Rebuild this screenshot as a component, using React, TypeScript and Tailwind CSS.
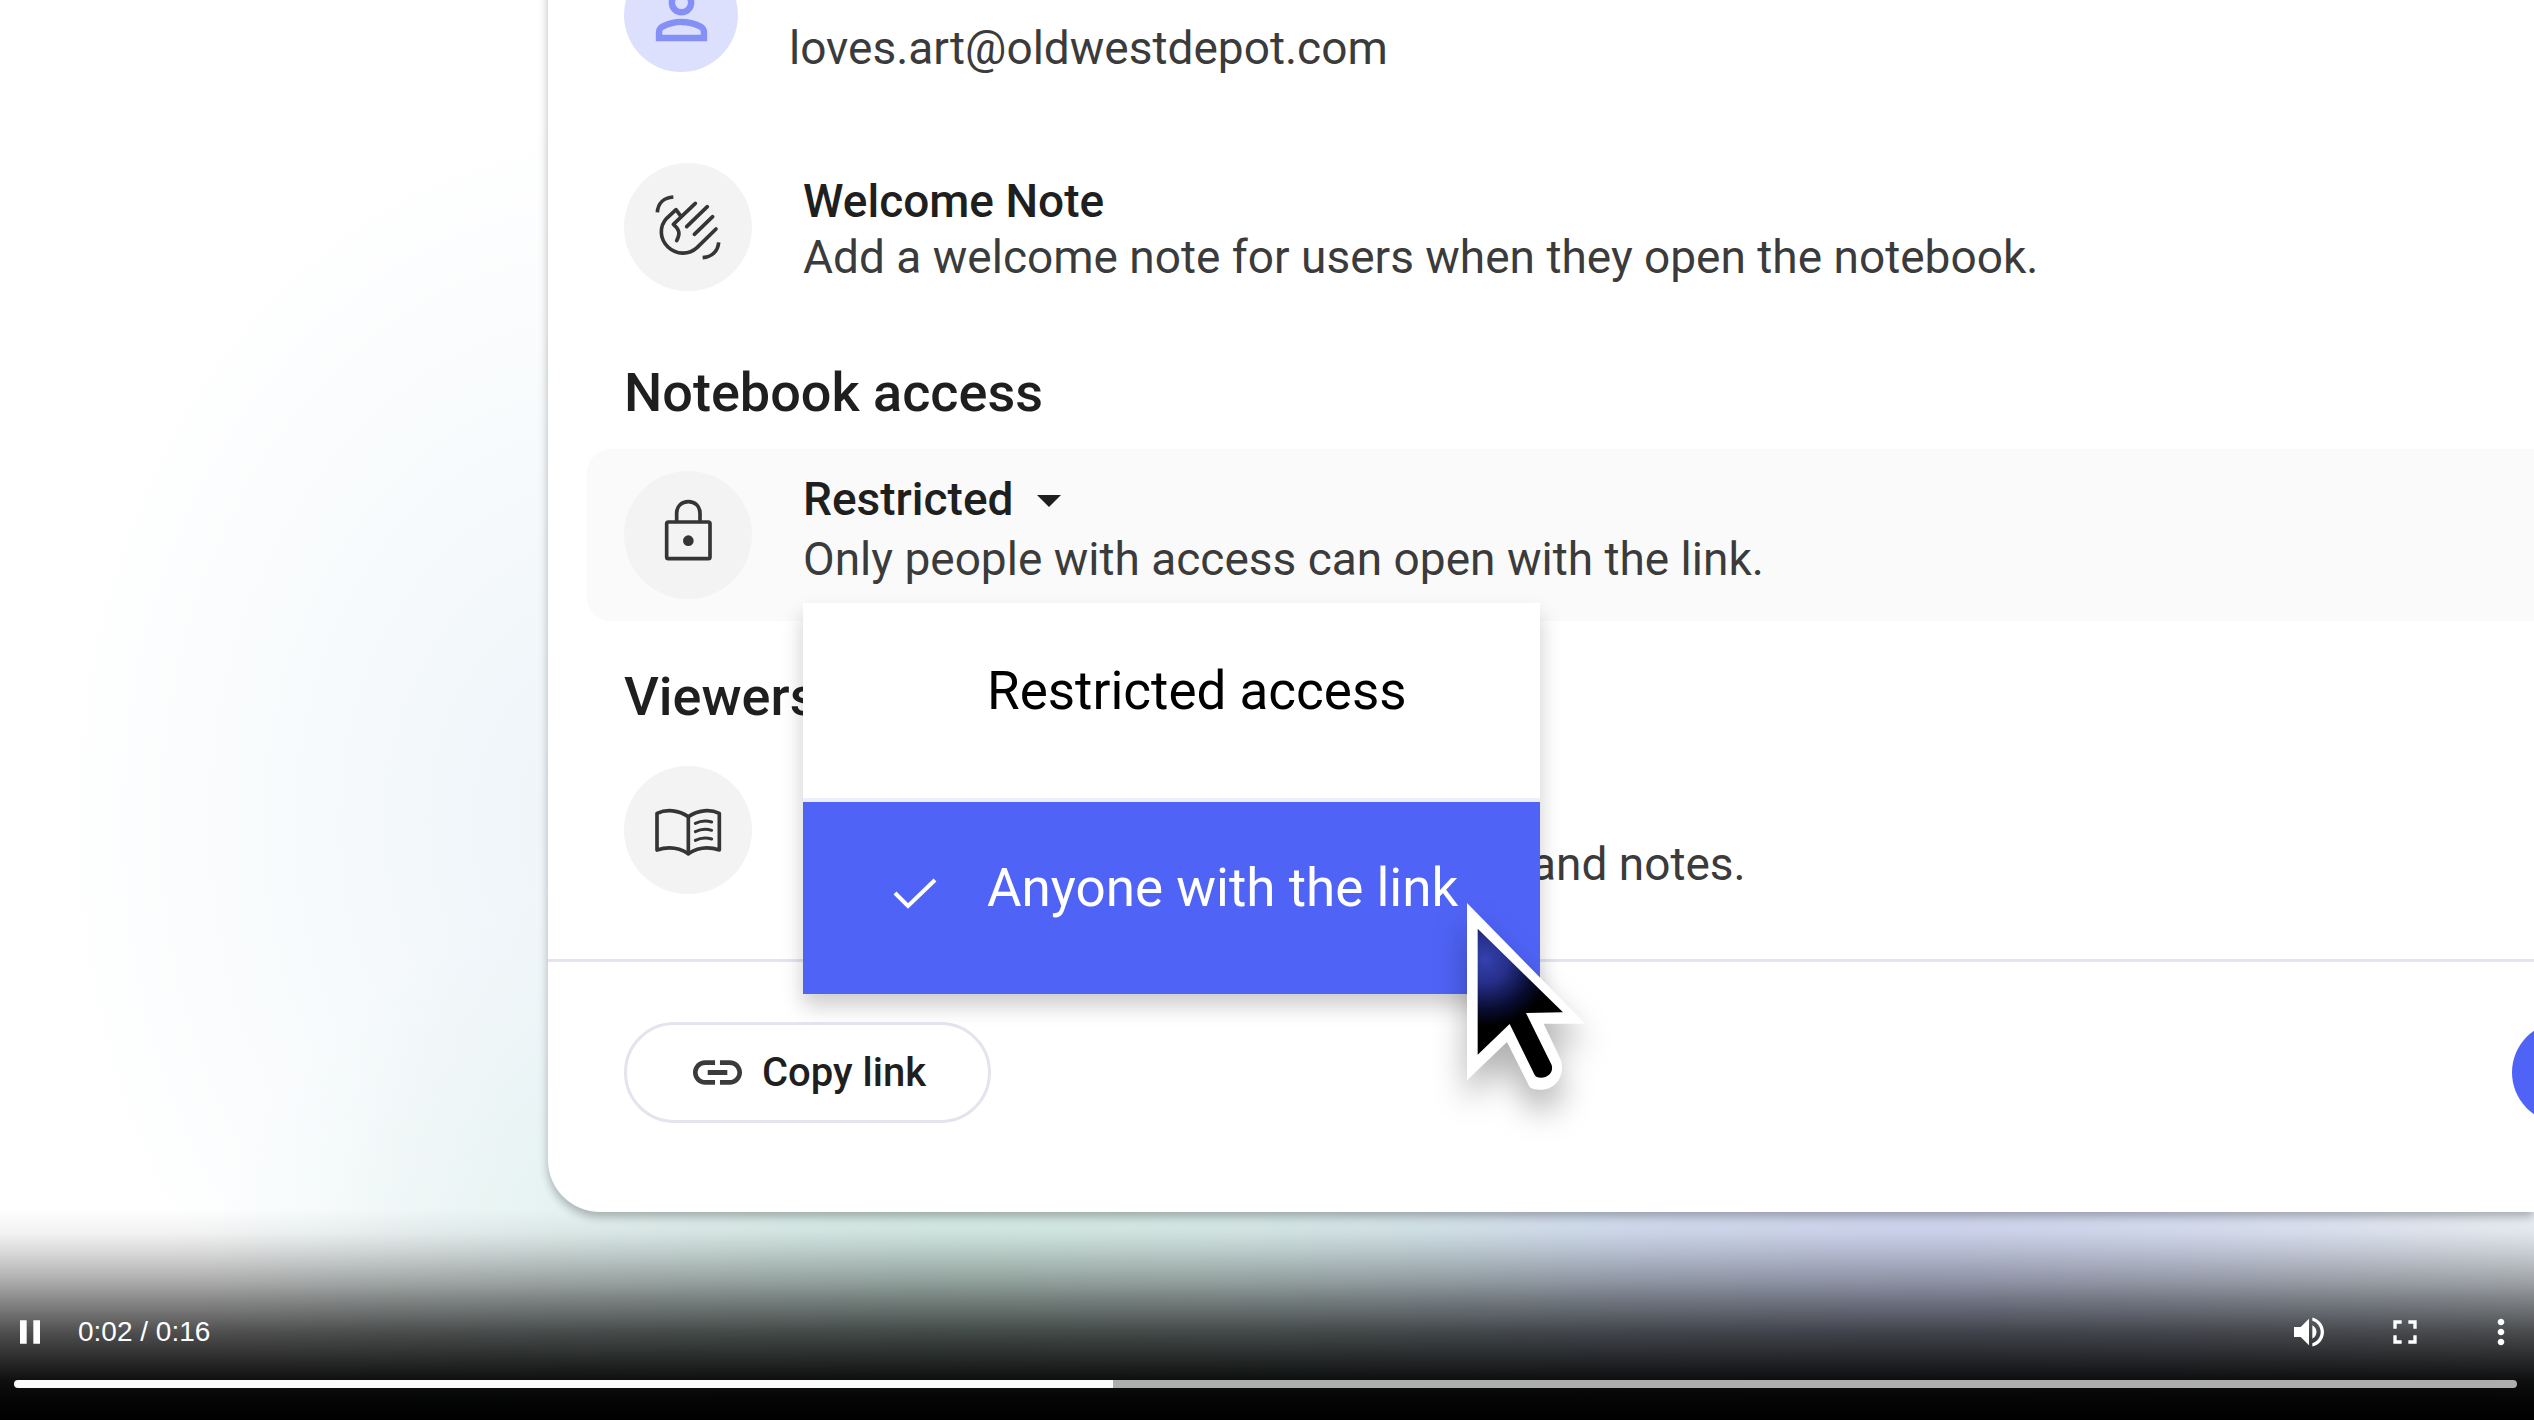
import { useState } from 'react';
import type { ReactNode } from 'react';

const ACCESS_OPTIONS = ['Restricted access', 'Anyone with the link'];

function CircleIcon({ viewBox, children }: { viewBox: string; children: ReactNode }) {
  return (
    <div className="size-32 shrink-0 rounded-full bg-[#f3f3f3]">
      <svg
        viewBox={viewBox}
        className="size-full text-[#353535]"
        fill="none"
        stroke="currentColor"
        strokeWidth={11}
        strokeLinecap="round"
        strokeLinejoin="round"
        aria-hidden="true"
      >
        {children}
      </svg>
    </div>
  );
}

function WaveIcon() {
  return (
    <CircleIcon viewBox="-48 39 384 384">
      <g strokeLinecap="butt">
        <path d="M52 187C54 160 71 143 100 141" />
        <path d="M236 277C234 303 216 321 188 323" />
      </g>
      <path d="M166 160L100 223C119 238 121 251 110 272" />
      <path d="M123 199L108 179L80 205C58 229 58 266 84 291C109 315 147 315 171 293L228 237" />
      <path d="M202 170L140 230" />
      <path d="M218 200L163 253" />
    </CircleIcon>
  );
}

function LockIcon() {
  return (
    <CircleIcon viewBox="-48 -27 384 384">
      <rect x="80" y="126" width="130" height="110" rx="5" />
      <path d="M110 124V100C110 78 125 65 145 65S180 78 180 100V124" />
      <circle cx="145" cy="182" r="16" fill="currentColor" stroke="none" />
    </CircleIcon>
  );
}

function BookIcon() {
  return (
    <CircleIcon viewBox="-48 18 384 384">
      <path d="M51 160C80 147 116 150 145 170C174 150 210 147 238 160V270C208 260 174 262 145 281C116 262 82 260 51 270Z" />
      <path d="M145 170V281" />
      <path d="M166 190Q190 178 215 186M166 215Q190 203 215 211M166 241Q190 229 215 237" strokeWidth={9} />
    </CircleIcon>
  );
}

function Cursor() {
  return (
    <svg
      viewBox="80 70 360 564"
      className="pointer-events-none absolute top-[300px] left-[664px] h-[188px] w-[120px] overflow-visible drop-shadow-[0_20px_16px_rgba(0,0,0,0.3)]"
      aria-hidden="true"
    >
      <defs>
        <radialGradient id="cursor-fill" gradientUnits="userSpaceOnUse" cx="135" cy="240" r="200">
          <stop offset="0" stopColor="#3441b0" />
          <stop offset="0.35" stopColor="#262f88" />
          <stop offset="0.75" stopColor="#090c30" />
          <stop offset="1" stopColor="#000" />
        </radialGradient>
      </defs>
      <path
        fill="#fff"
        d="M80 70L435 432H310L362 542C374 580 352 628 305 630C280 630 270 626 266 618L200 487L80 602Z"
      />
      <path
        fill="url(#cursor-fill)"
        d="M112 147L368 398L257 400L334 556C340 578 324 594 302 594C292 594 286 592 283 586L208 433L112 525Z"
      />
    </svg>
  );
}

function AccessMenu({ selected, onSelect }: { selected: string; onSelect: (v: string) => void }) {
  return (
    <div className="absolute top-[132px] left-0 w-[737px] bg-white shadow-[0_12px_20px_rgba(0,0,0,0.2)]">
      <ul role="listbox" aria-label="Notebook access">
        {ACCESS_OPTIONS.map((option) => {
          const active = option === selected;
          return (
            <li key={option} role="option" aria-selected={active}>
              <button
                onClick={() => onSelect(option)}
                className={
                  active
                    ? 'flex h-48 w-full items-center bg-[#4f63f6] pb-5 pl-[90px] text-white'
                    : 'flex h-[199px] w-full items-center border-b-4 border-[#eceef9] pb-5 pl-[90px] text-black'
                }
              >
                <span className="w-[94px]">
                  {active && (
                    <svg
                      viewBox="0 0 44 32"
                      className="mt-3 h-8 w-11"
                      fill="none"
                      stroke="currentColor"
                      strokeWidth={4}
                      aria-hidden="true"
                    >
                      <path d="M2 15L15 28L42 2" />
                    </svg>
                  )}
                </span>
                <span className="text-[53px] leading-16">{option}</span>
              </button>
            </li>
          );
        })}
      </ul>
      <Cursor />
    </div>
  );
}

function ShareCard() {
  const [selected, setSelected] = useState(ACCESS_OPTIONS[1]);

  return (
    <main className="relative ml-[548px] rounded-bl-[52px] bg-white pb-[89px] text-[46px] leading-14 text-[#3b3b3b] shadow-[0_5px_10px_rgba(0,0,0,0.28)]">
      <div className="pl-[76px]">
        <div className="-mt-[42px] flex h-[114px] gap-[51px]">
          <div className="flex size-[114px] shrink-0 items-center justify-center rounded-full bg-[#dde0fd]">
            <svg viewBox="0 0 24 24" className="size-[77px] text-[#8490f6]" fill="currentColor" aria-hidden="true">
              <path d="M12 12q-1.65 0-2.825-1.175T8 8t1.175-2.825T12 4t2.825 1.175T16 8t-1.175 2.825T12 12m0-2q.825 0 1.413-.587T14 8t-.587-1.412T12 6t-1.412.588T10 8t.588 1.413T12 10" />
              <path d="M4 20v-2.8q0-.85.438-1.562T5.6 14.55q1.55-.775 3.15-1.162T12 13t3.25.388 3.15 1.162q.725.375 1.163 1.088T20 17.2V20zm2-2h12v-.8q0-.275-.137-.5t-.363-.35q-1.35-.675-2.725-1.012T12 15t-2.775.338T6.5 16.35q-.225.125-.363.35T6 17.2z" />
            </svg>
          </div>
          <p className="self-end leading-12">loves.art@oldwestdepot.com</p>
        </div>

        <div className="mt-[91px] flex items-center gap-[51px]">
          <WaveIcon />
          <div className="pt-1">
            <h3 className="font-medium text-[#1f1f1f]">Welcome Note</h3>
            <p>Add a welcome note for users when they open the notebook.</p>
          </div>
        </div>

        <h2 className="mt-[72px] text-[54px] leading-15 font-medium text-[#1f1f1f]">Notebook access</h2>
        <div className="relative z-10 mt-[26px] -ml-[37px] flex gap-[51px] rounded-l-3xl bg-[#fafafa] py-[22px] pl-[37px]">
          <LockIcon />
          <div className="relative flex flex-col gap-1">
            <button
              className="flex items-center gap-6 font-medium text-[#1f1f1f]"
              aria-haspopup="listbox"
              aria-expanded="true"
            >
              Restricted
              <svg viewBox="0 0 24 12" className="mt-1 h-3 w-6" fill="currentColor" aria-hidden="true">
                <path d="M0 0H24L12 12Z" />
              </svg>
            </button>
            <p>Only people with access can open with the link.</p>
            <AccessMenu selected={selected} onSelect={setSelected} />
          </div>
        </div>

        <h2 className="mt-[46px] text-[54px] leading-15 font-medium text-[#1f1f1f]">Viewers</h2>
        <div className="mt-[39px] flex gap-[51px]">
          <BookIcon />
          <p className="self-end pb-0.5 pl-[728px]">and notes.</p>
        </div>
      </div>

      <footer className="mt-[65px] flex justify-between border-t-3 border-[#e3e4ed] pt-[60px] pl-[76px]">
        <button className="flex h-[101px] items-center gap-5 rounded-full border-3 border-[#e3e4ed] pr-[62px] pl-[66px] text-[40px] font-medium text-[#1f1f1f]">
          <svg viewBox="2 7 20 10" className="h-[25px] w-[49px]" fill="#3b3b3b" aria-hidden="true">
            <path d="M3.9 12c0-1.71 1.39-3.1 3.1-3.1h4V7H7c-2.76 0-5 2.24-5 5s2.24 5 5 5h4v-1.9H7c-1.71 0-3.1-1.39-3.1-3.1zM8 13h8v-2H8v2zm9-6h-4v1.9h4c1.71 0 3.1 1.39 3.1 3.1s-1.39 3.1-3.1 3.1h-4V17h4c2.76 0 5-2.24 5-5s-2.24-5-5-5z" />
          </svg>
          Copy link
        </button>
        <button className="-mr-[238px] w-[260px] rounded-full bg-[#4f63f6]" aria-label="Done" />
      </footer>
    </main>
  );
}

function PlayerButton({ label, path }: { label: string; path: string }) {
  return (
    <button aria-label={label}>
      <svg viewBox="0 0 24 24" className="size-10" fill="currentColor" aria-hidden="true">
        <path d={path} />
      </svg>
    </button>
  );
}

function PlayerControls() {
  const [progress, setProgress] = useState(43.9);

  return (
    <div className="absolute inset-x-0 bottom-0 z-20 bg-[linear-gradient(to_bottom,transparent_4%,rgba(0,0,0,0.05)_15%,rgba(0,0,0,0.14)_23%,rgba(0,0,0,0.23)_30%,rgba(0,0,0,0.34)_38%,rgba(0,0,0,0.46)_45%,rgba(0,0,0,0.58)_53%,rgba(0,0,0,0.69)_60%,rgba(0,0,0,0.78)_68%,rgba(0,0,0,0.87)_76%,rgba(0,0,0,0.94)_82%,rgba(0,0,0,0.98)_91%,#000_100%)] pt-[112px] text-white">
      <div className="flex items-center pr-[13px] pl-[10px]">
        <PlayerButton label="Pause" path="M6 19h4V5H6v14zm8-14v14h4V5h-4z" />
        <span className="ml-7 font-['Liberation_Sans',sans-serif] text-[28px] leading-10">0:02 / 0:16</span>
        <div className="ml-auto flex gap-14">
          <PlayerButton
            label="Mute"
            path="M3 9v6h4l5 5V4L7 9H3zm13.5 3c0-1.77-1.02-3.29-2.5-4.03v8.05c1.48-.73 2.5-2.25 2.5-4.02zM14 3.23v2.06c2.89.86 5 3.54 5 6.71s-2.11 5.85-5 6.71v2.06c4.01-.91 7-4.49 7-8.77s-2.99-7.86-7-8.77z"
          />
          <PlayerButton
            label="Full screen"
            path="M7 14H5v5h5v-2H7v-3zm-2-4h2V7h3V5H5v5zm12 7h-3v2h5v-5h-2v3zM14 5v2h3v3h2V5h-5z"
          />
          <PlayerButton
            label="More options"
            path="M12 8c1.1 0 2-.9 2-2s-.9-2-2-2-2 .9-2 2 .9 2 2 2zm0 2c-1.1 0-2 .9-2 2s.9 2 2 2 2-.9 2-2-.9-2-2-2zm0 6c-1.1 0-2 .9-2 2s.9 2 2 2 2-.9 2-2-.9-2-2-2z"
          />
        </div>
      </div>
      <div className="flex pt-7 pr-[17px] pb-8 pl-[14px]">
        <input
          type="range"
          aria-label="Video progress"
          min={0}
          max={100}
          step={0.1}
          value={progress}
          onChange={(e) => setProgress(Number(e.target.value))}
          className="h-2 w-full appearance-none rounded-full [&::-webkit-slider-thumb]:size-0 [&::-webkit-slider-thumb]:appearance-none"
          style={{ background: `linear-gradient(to right, #fafafa ${progress}%, #adadad ${progress}%)` }}
        />
      </div>
    </div>
  );
}

export default function App() {
  return (
    <div className="relative min-h-screen overflow-hidden bg-white font-['Roboto',sans-serif]">
      <div className="absolute inset-0 bg-[radial-gradient(ellipse_22%_50%_at_24%_58%,rgba(222,235,243,0.55),rgba(222,235,243,0)),radial-gradient(ellipse_28%_34%_at_36%_92%,rgba(204,234,222,0.75),rgba(204,234,222,0)),radial-gradient(ellipse_28%_40%_at_76%_92%,rgba(206,210,245,0.8),rgba(206,210,245,0)),radial-gradient(ellipse_54%_40%_at_66%_92%,rgba(208,227,234,0.9),rgba(208,227,234,0))]" />
      <ShareCard />
      <PlayerControls />
    </div>
  );
}
